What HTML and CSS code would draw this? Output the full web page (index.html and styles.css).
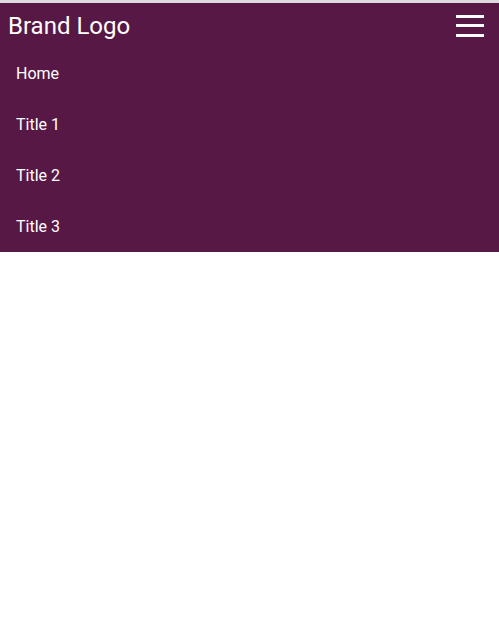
FILE: index.html
```html
<!DOCTYPE html>
<html>
<head>
<meta charset="utf-8">
<link rel="stylesheet" href="styles.css">
</head>
<body>
<div class="topstrip"></div>
<nav class="navbar">
  <div class="header">
    <span class="brand">Brand Logo</span>
    <button class="toggle" aria-label="menu">
      <span class="bar"></span>
      <span class="bar"></span>
      <span class="bar"></span>
    </button>
  </div>
  <ul class="menu">
    <li class="item">Home</li>
    <li class="item">Title 1</li>
    <li class="item">Title 2</li>
    <li class="item">Title 3</li>
  </ul>
</nav>
</body>
</html>
```

FILE: styles.css
```css
html, body {
  margin: 0;
  padding: 0;
  background: #ffffff;
  font-family: Roboto, "Liberation Sans", sans-serif;
}
.topstrip {
  height: 3px;
  background: #dcdcdc;
}
.navbar {
  background: #581845;
  color: #ffffff;
}
.header {
  height: 45px;
  display: flex;
  align-items: center;
  justify-content: space-between;
  padding: 0 15px 0 8px;
}
.brand {
  font-size: 24px;
  line-height: 1;
  margin-top: 1px;
}
.toggle {
  background: none;
  border: 0;
  padding: 0;
  width: 28px;
  display: flex;
  flex-direction: column;
  gap: 6.5px;
  margin-top: 0;
}
.bar {
  display: block;
  height: 3px;
  width: 28px;
  background: #ffffff;
}
.menu {
  list-style: none;
  margin: 0;
  padding: 0;
}
.item {
  height: 51px;
  line-height: 51px;
  padding: 0 16px;
  font-size: 16px;
}
```
